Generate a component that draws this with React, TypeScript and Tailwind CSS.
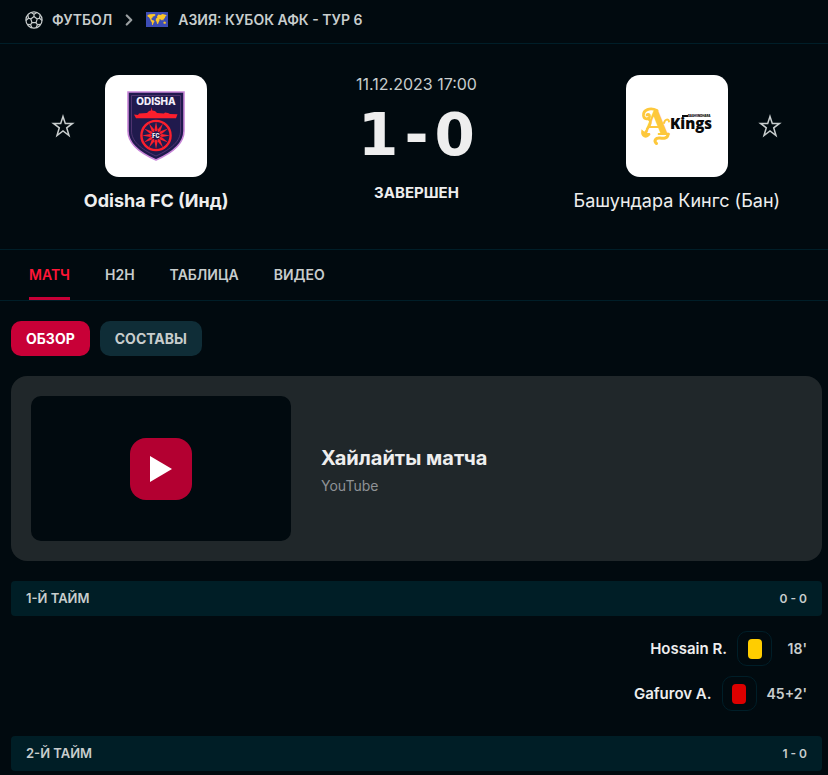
import type { ReactNode } from 'react';
import { ChevronRight } from 'lucide-react';

interface TeamProps {
  name: string;
  logo: ReactNode;
  winner?: boolean;
  starSide: 'left' | 'right';
}

interface Incident {
  player: string;
  time: string;
  card: 'yellow' | 'red';
}

interface PeriodProps {
  title: string;
  score: string;
  incidents?: Incident[];
}

const TABS = ['МАТЧ', 'H2H', 'ТАБЛИЦА', 'ВИДЕО'];

const FIRST_HALF: Incident[] = [
  { player: 'Hossain R.', time: "18'", card: 'yellow' },
  { player: 'Gafurov A.', time: "45+2'", card: 'red' },
];

const FootballIcon = () => (
  <svg
    viewBox="0 0 20 20"
    className="size-[18px] shrink-0"
    fill="none"
    stroke="currentColor"
    strokeWidth="1.3"
    strokeLinejoin="round"
    aria-hidden="true"
  >
    <circle cx="10" cy="10" r="9" />
    <path d="M10 6.2 13.6 8.8 12.2 13H7.8L6.4 8.8Z" />
    <path d="M10 6.2V3.6M13.6 8.8l2.5-.8M12.2 13l1.6 2.2M7.8 13l-1.6 2.2M6.4 8.8 3.9 8" />
    <path d="M6.7 1.7 10 3.6l3.3-1.9M16.9 4.2 16.1 8l2.9 2.6M17.6 14.8l-3.8.4-1.6 3.5M2.4 14.8l3.8.4 1.6 3.5M3.1 4.2 3.9 8 1 10.6" />
  </svg>
);

const AsiaFlag = () => (
  <svg viewBox="0 0 22 15" className="h-[15px] w-[22px] shrink-0" aria-hidden="true">
    <rect width="22" height="15" fill="#3d4db5" />
    <g fill="#fdc628">
      <path d="M1.5 3 4 2.3l4.6-.2 1 .9-1.4 1.2-1.3.3-.6 1.5-1 .5.6 1.4 2 .6.6 1-1 1.6-.8 2-.7-.2-.2-2.6-1-1.2-.5-1.5L3 5.2 1.6 4.4Z" />
      <path d="m11 4.5 1.3-1.9 2.1.4L16.6 2l3.6 1 .3 1.1-1.3.4-.3 1.6-1.2 1-.6 1.6-1-1.3-.9 1.2-1-1.6-.9.4.3 1-1 1.8-.4 1.5-1 .2-.6-2.2-.9-1.3.3-1.9 1.3-.7Z" />
      <path d="m17.4 10 1.6-.6 1 1.2-.7 1.3-1.8-.4Z" />
    </g>
  </svg>
);

const StarIcon = () => (
  <svg
    viewBox="0 0 24 24"
    className="size-6"
    fill="none"
    stroke="currentColor"
    strokeWidth="1.5"
    aria-hidden="true"
  >
    <path d="M12 2.4 14.3 9.4H21.5L15.7 13.8 18 21.5 12 17 6 21.5 8.3 13.8 2.5 9.4H9.7Z" />
  </svg>
);

const SPOKES = [0, 30, 60, 90, 120, 150, 180, 210, 240, 270, 300, 330];

const OdishaLogo = () => (
  <svg viewBox="0 0 58 70" className="h-[70px] w-[58px]" role="img" aria-label="Odisha FC">
    <path
      d="M1 1h56v39c0 13-12 22-28 29C13 62 1 53 1 40Z"
      fill="#201a4d"
      stroke="#c886d8"
      strokeWidth="1.6"
    />
    <path
      d="M4.5 4.5h49V40c0 10-9 18-24.5 25C13.5 58 4.5 50 4.5 40Z"
      fill="none"
      stroke="#5a3a78"
      strokeWidth=".8"
    />
    <text
      x="29"
      y="14"
      textAnchor="middle"
      fill="#f3effa"
      fontFamily="Inter, sans-serif"
      fontWeight="800"
      fontSize="10"
    >
      ODISHA
    </text>
    <path
      d="M7 23.5l4 .5 1-1.5 8-.5 2-2 2-.5.5-3.5.8 3.5 2.7.5 2 2 7 .5 1-1 3 .5 2 1 7.5.2-1.5 4H9Z"
      fill="#fb1f2d"
    />
    <circle cx="29" cy="44.5" r="14.6" fill="none" stroke="#fb1f2d" strokeWidth="2.4" />
    <g fill="#fb1f2d">
      {SPOKES.map((angle) => (
        <path key={angle} d="M29 30.5 30.5 38.5 29 42 27.5 38.5Z" transform={`rotate(${angle} 29 44.5)`} />
      ))}
    </g>
    <circle cx="29" cy="44.5" r="4.2" fill="#201a4d" />
    <text
      x="29"
      y="46.5"
      textAnchor="middle"
      fill="#fff"
      fontFamily="Inter, sans-serif"
      fontWeight="800"
      fontSize="5.5"
    >
      FC
    </text>
  </svg>
);

const KingsLogo = () => (
  <svg
    viewBox="0 0 74 40"
    className="h-10 w-[74px] overflow-visible"
    role="img"
    aria-label="Bashundhara Kings"
  >
    <text
      x="3"
      y="29"
      fill="#fdc83c"
      fontFamily="DejaVu Serif, serif"
      fontWeight="700"
      fontSize="34"
    >
      A
    </text>
    <g fill="none" stroke="#fdc83c" strokeLinecap="round">
      <path d="M17 4.5C10 1 3 4 3.5 9.5c.5 4 5.5 4.5 6 1 .2-2-1.5-2.5-2.5-1.5" strokeWidth="2.8" />
      <path d="M8 13c4 2 3 6-1 10" strokeWidth="2.2" />
      <path d="M9 28.500c-3 3.500-7 1.500-6.500-2.500 1.500 1.500 3.500 1 4-1" strokeWidth="2.6" />
      <path d="M28 28c0 5-5 4.500-8 4-4.500-.5-6.500 3-3.500 5.500" strokeWidth="3" />
      <path d="M24 17c1-4 4.500-4.500 5-1.500" strokeWidth="2" />
    </g>
    <text
      x="30"
      y="23"
      fill="#0a0a0a"
      fontFamily="Open Sans, sans-serif"
      fontWeight="800"
      fontSize="15"
    >
      Kings
    </text>
    <rect x="42" y="9" width="6" height="2" fill="#0a0a0a" />
    <text
      x="48"
      y="11"
      fill="#0a0a0a"
      fontFamily="Inter, sans-serif"
      fontWeight="900"
      fontSize="2.8"
    >
      BASHUNDHARA
    </text>
  </svg>
);

const FavoriteButton = ({ team }: { team: string }) => (
  <button type="button" aria-label={team} className="shrink-0 text-[#c8cdcd]">
    <StarIcon />
  </button>
);

const Team = ({ name, logo, winner, starSide }: TeamProps) => (
  <div className="flex flex-col items-center">
    <div className="flex items-center gap-[30px]">
      {starSide === 'left' ? <FavoriteButton team={name} /> : <span className="w-6" />}
      <div className="flex size-[102px] items-center justify-center rounded-[14px] bg-white">
        {logo}
      </div>
      {starSide === 'right' ? <FavoriteButton team={name} /> : <span className="w-6" />}
    </div>
    <a
      href="#team"
      className={[
        'mt-2.5 text-lg whitespace-nowrap text-[#eeeeee]',
        winner ? 'font-bold' : '',
      ].join(' ')}
    >
      {name}
    </a>
  </div>
);

const Period = ({ title, score, incidents = [] }: PeriodProps) => (
  <section>
    <div className="flex h-[35px] items-center justify-between rounded bg-[#001e26] px-[15px] font-semibold text-[#c8cdcd]">
      <h2 className="text-[13px]">{title}</h2>
      <span className="text-xs">{score}</span>
    </div>
    <ul className="flex flex-col gap-2.5 py-[15px]">
      {incidents.map(({ player, time, card }) => (
        <li key={player} className="flex h-[35px] items-center justify-end gap-2.5 px-[15px] text-sm">
          <a href="#player" className="text-[15px] font-semibold text-[#eeeeee]">
            {player}
          </a>
          <span className="flex size-[35px] items-center justify-center rounded-[10px] border border-[#001e28]">
            <span
              className={[
                'h-5 w-3.5 rounded',
                card === 'yellow' ? 'bg-[#ffcd00]' : 'bg-[#dc0000]',
              ].join(' ')}
            />
          </span>
          <span className="min-w-[25px] text-right font-semibold text-[#c8cdcd]">{time}</span>
        </li>
      ))}
    </ul>
  </section>
);

export default function App() {
  return (
    <div className="min-h-screen overflow-hidden bg-[#010a0f] font-['Inter',sans-serif] text-[#c8cdcd]">
      <nav className="flex h-11 items-center border-b border-[#001e28] px-[25px] pb-1 text-sm font-semibold">
        <FootballIcon />
        <a href="#football" className="ml-[9px]">
          ФУТБОЛ
        </a>
        <ChevronRight className="mx-2 size-[18px] text-[#9a9fa1]" strokeWidth={3} />
        <AsiaFlag />
        <a href="#league" className="ml-2.5">
          АЗИЯ: КУБОК АФК - ТУР 6
        </a>
      </nav>

      <header className="border-b border-[#001e28] pr-1.5 pl-[11px]">
        <div className="grid grid-cols-3 px-[15px] pt-[31px] pb-[34px]">
          <Team name="Odisha FC (Инд)" logo={<OdishaLogo />} starSide="left" winner />
          <div className="flex flex-col items-center">
            <time className="text-base leading-[18px] text-[#c8cdcd]">11.12.2023 17:00</time>
            <div className="mt-3 flex h-[60px] items-center gap-1.5 font-['DejaVu_Sans',sans-serif] text-[58px] font-bold text-[#eeeeee]">
              <span>1</span>
              <span>-</span>
              <span>0</span>
            </div>
            <span className="mt-[18px] text-[15px] leading-5 font-bold text-[#eeeeee]">ЗАВЕРШЕН</span>
          </div>
          <Team name="Башундара Кингс (Бан)" logo={<KingsLogo />} starSide="right" />
        </div>
      </header>

      <nav className="flex h-[51px] gap-[35px] border-b border-[#001e28] px-[29px] text-sm font-semibold">
        {TABS.map((tab, i) => (
          <a
            key={tab}
            href="#tab"
            className={[
              'flex items-center border-b-3 pt-[3px]',
              i === 0 ? 'border-[#c80037] text-[#ff1637]' : 'border-transparent',
            ].join(' ')}
          >
            {tab}
          </a>
        ))}
      </nav>

      <main className="pt-5 pr-1.5 pl-[11px]">
        <div className="flex gap-2.5 text-sm">
          <button type="button" className="h-[35px] rounded-[10px] bg-[#c80037] px-[15px] font-bold text-white">
            ОБЗОР
          </button>
          <button type="button" className="h-[35px] rounded-[10px] bg-[#0f2d37] px-[15px] font-bold">
            СОСТАВЫ
          </button>
        </div>

        <section className="my-5 flex items-center gap-[30px] rounded-2xl bg-[#20272a] p-5">
          <div className="flex h-[145px] w-[260px] items-center justify-center rounded-[10px] bg-[#010a0f]">
            <button
              type="button"
              aria-label="Хайлайты матча"
              className="flex size-[62px] items-center justify-center rounded-2xl bg-[#b30031]"
            >
              <svg viewBox="0 0 22 26" className="h-[26px] w-[22px]" aria-hidden="true">
                <path d="M0 0 22 13 0 26Z" fill="#fff" />
              </svg>
            </button>
          </div>
          <div className="pt-0.5">
            <h2 className="text-xl font-bold text-[#eeeeee]">Хайлайты матча</h2>
            <p className="mt-1 text-sm text-[#8f9296]">YouTube</p>
          </div>
        </section>

        <div className="flex flex-col gap-2.5">
          <Period title="1-Й ТАЙМ" score="0 - 0" incidents={FIRST_HALF} />
          <Period title="2-Й ТАЙМ" score="1 - 0" />
        </div>
      </main>
    </div>
  );
}
